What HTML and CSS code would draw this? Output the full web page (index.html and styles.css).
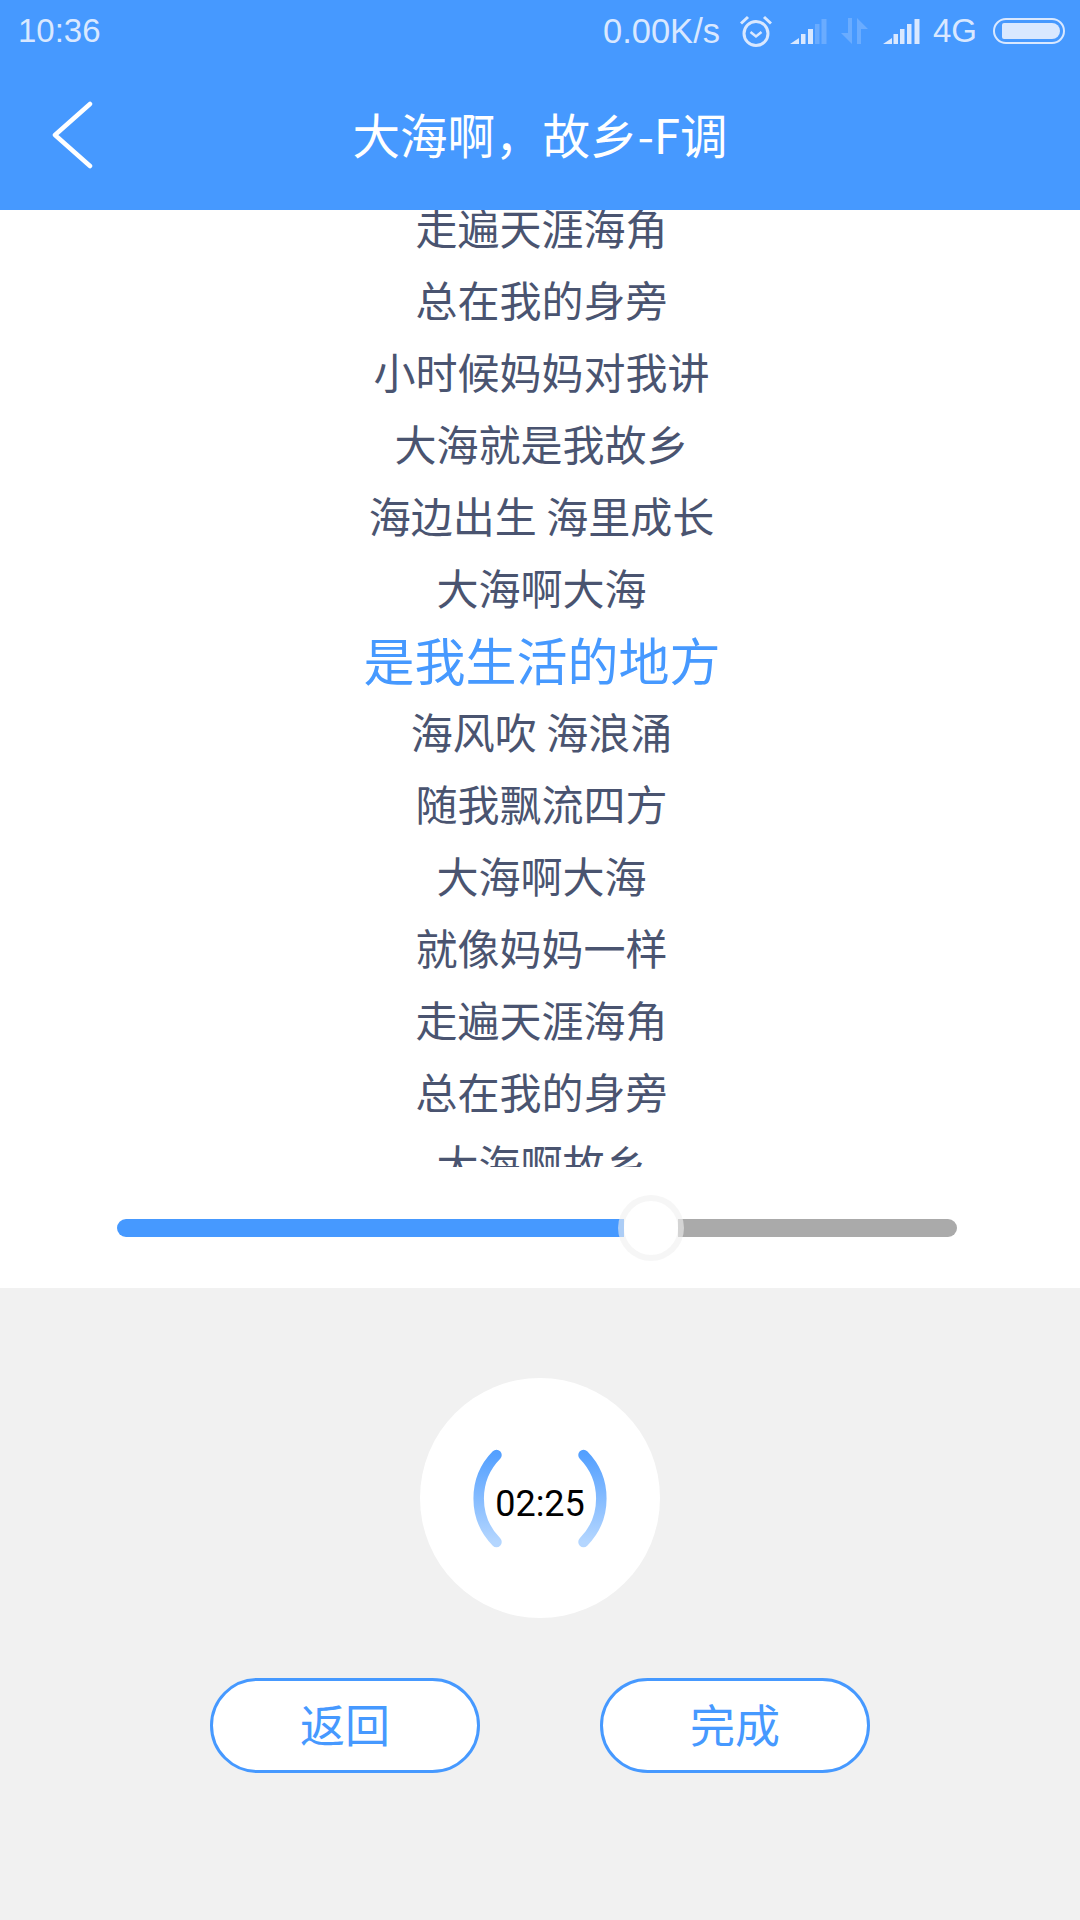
FILE: index.html
```html
<!DOCTYPE html>
<html lang="zh-CN">
<head>
<meta charset="UTF-8">
<meta name="viewport" content="width=device-width, initial-scale=1.0">
<title>大海啊，故乡-F调</title>
<link rel="stylesheet" href="styles.css">
</head>
<body>
<div class="header">
  <div class="status-bar">
    <span class="status-time">10:36</span>
    <div class="status-right">
      <span class="status-speed">0.00K/s</span>
      <svg class="icon-alarm" width="32" height="32" viewBox="0 0 32 32">
        <circle cx="16" cy="18.500" r="12" fill="none" stroke="#d9e8ff" stroke-width="3"/>
        <path d="M10.500 17l5.500 4.500 5.500-4.500" fill="none" stroke="#d9e8ff" stroke-width="2.500"/>
        <path d="M1 8.500l7-6.500M31 8.500l-7-6.500" fill="none" stroke="#d9e8ff" stroke-width="3"/>
      </svg>
      <svg class="icon-signal" width="37" height="25" viewBox="0 0 37 25">
        <path d="M0 25l9-6v6zM11 25v-10h4.500v10zM18 25v-15h5v15z" fill="#d9e8ff"/>
        <path d="M25 25v-20h4.500v20zM31.500 25v-25h5v25z" fill="#d9e8ff" opacity="0.25"/>
      </svg>
      <svg class="icon-data" width="27" height="26" viewBox="0 0 27 26">
        <path d="M0 15h7v-15h4v26zM16 26v-26l11 11h-7v15z" fill="#d9e8ff" opacity="0.25"/>
      </svg>
      <svg class="icon-signal" width="37" height="25" viewBox="0 0 37 25">
        <path d="M0 25l9-6v6zM10.500 25v-10h4.500v10zM17 25v-15h4.500v15zM24 25v-20h4.500v20zM31.500 25v-25h5v25z" fill="#d9e8ff"/>
      </svg>
      <span class="status-net">4G</span>
      <div class="battery"><div class="battery-level"></div></div>
    </div>
  </div>
  <div class="nav-bar">
    <svg class="back" width="44" height="68" viewBox="0 0 44 68">
      <path d="M39 3L4 34l35 31" fill="none" stroke="#fff" stroke-width="4.500" stroke-linecap="round" stroke-linejoin="round"/>
    </svg>
    <h1 class="title">大海啊，故乡-F调</h1>
  </div>
</div>

<div class="lyrics">
  <ul class="lyric-list">
    <li>走遍天涯海角</li>
    <li>总在我的身旁</li>
    <li>小时候妈妈对我讲</li>
    <li>大海就是我故乡</li>
    <li>海边出生 海里成长</li>
    <li>大海啊大海</li>
    <li class="current">是我生活的地方</li>
    <li>海风吹 海浪涌</li>
    <li>随我飘流四方</li>
    <li>大海啊大海</li>
    <li>就像妈妈一样</li>
    <li>走遍天涯海角</li>
    <li>总在我的身旁</li>
    <li>大海啊故乡</li>
  </ul>
</div>

<div class="slider">
  <div class="track">
    <div class="track-fill"></div>
    <div class="thumb"></div>
    <div class="track-rest"></div>
  </div>
</div>

<div class="controls">
  <div class="timer">
    <svg class="timer-arcs" width="240" height="240" viewBox="0 0 240 240">
      <defs>
        <linearGradient id="arcFill" gradientUnits="userSpaceOnUse" x1="0" y1="76" x2="0" y2="164">
          <stop offset="0" stop-color="#54a0ff"/>
          <stop offset="1" stop-color="#b4d6ff"/>
        </linearGradient>
      </defs>
      <path d="M76.500 77A62 62 0 0 0 76.500 164M163.500 77A62 62 0 0 1 163.500 164" fill="none" stroke="url(#arcFill)" stroke-width="10.500" stroke-linecap="round"/>
    </svg>
    <span class="timer-text">02:25</span>
  </div>
  <div class="buttons">
    <button class="btn">返回</button>
    <button class="btn">完成</button>
  </div>
</div>
</body>
</html>
```
FILE: styles.css
```css
* {
  box-sizing: border-box;
}
body {
  margin: 0;
  height: 1920px;
  overflow: hidden;
  background-color: #f1f1f1;
  font-family: "Liberation Sans", "Noto Sans CJK SC", sans-serif;
}
.header {
  height: 210px;
  background-color: #4699ff;
}
.status-bar {
  height: 60px;
  padding: 2px 15px 0 18px;
  display: flex;
  align-items: center;
  justify-content: space-between;
  color: #d9e8ff;
  font-size: 33px;
}
.status-right {
  display: flex;
  align-items: center;
}
.status-speed {
  font-size: 34.500px;
}
.icon-alarm {
  margin-left: 20px;
  margin-right: 1px;
}
.icon-signal {
  margin-left: 17px;
}
.icon-data {
  margin-left: 14px;
}
.icon-data + .icon-signal {
  margin-left: 15px;
}
.status-net {
  margin-left: 13px;
  margin-right: 1px;
}
.battery {
  margin-left: 15px;
  width: 72px;
  height: 26px;
  padding: 3px 3px 3px 7px;
  border: 2px solid #d9e8ff;
  border-radius: 13px;
}
.battery-level {
  height: 100%;
  background-color: #d9e8ff;
  border-radius: 2px 8px 8px 2px;
}
.nav-bar {
  height: 150px;
  padding-left: 51px;
  display: grid;
  grid-template-columns: 1fr;
  align-items: center;
}
.back,
.title {
  grid-area: 1 / 1;
}
.title {
  margin: -4px 0 0 -51px;
  text-align: center;
  color: #fff;
  font-size: 47.500px;
  font-weight: normal;
  font-family: "Noto Sans CJK SC", sans-serif;
}
.lyrics {
  height: 957px;
  overflow: hidden;
  background-color: #fff;
}
.lyric-list {
  list-style: none;
  margin: -19px 0 0;
  padding: 0 0 0 3px;
  text-align: center;
  font-family: "Noto Sans CJK SC", sans-serif;
  font-size: 42px;
  line-height: 72px;
  color: #4a5470;
}
.lyric-list .current {
  margin-left: 1px;
  font-size: 51px;
  color: #4699ff;
}
.slider {
  height: 121px;
  padding: 1px 123px 0 117px;
  display: flex;
  align-items: center;
  background-color: #fff;
}
.track {
  width: 100%;
  height: 18px;
  display: flex;
  align-items: center;
}
.track-fill {
  width: 507px;
  height: 100%;
  background-color: #4699ff;
  border-radius: 9px 0 0 9px;
}
.thumb {
  flex: none;
  width: 66px;
  height: 66px;
  margin: 0 -6px;
  position: relative;
  border: 6px solid rgba(240, 240, 240, 0.6);
  border-radius: 50%;
  background-color: #fff;
  background-clip: padding-box;
}
.track-rest {
  flex: 1;
  height: 100%;
  background-color: #aaa;
  border-radius: 0 9px 9px 0;
}
.controls {
  padding-top: 90px;
  display: flex;
  flex-direction: column;
  align-items: center;
}
.timer {
  width: 240px;
  height: 240px;
  display: grid;
  place-items: center;
  border-radius: 50%;
  background-color: #fff;
}
.timer-arcs,
.timer-text {
  grid-area: 1 / 1;
}
.timer-text {
  padding-top: 11px;
  font-family: Roboto, sans-serif;
  font-size: 36px;
  color: #000;
}
.buttons {
  margin-top: 60px;
  display: flex;
  gap: 120px;
}
.btn {
  width: 270px;
  height: 95px;
  padding: 0 0 4px;
  border: 3px solid #4699ff;
  border-radius: 48px;
  background-color: #fff;
  color: #4699ff;
  font-family: "Noto Sans CJK SC", sans-serif;
  font-size: 45px;
}
```
